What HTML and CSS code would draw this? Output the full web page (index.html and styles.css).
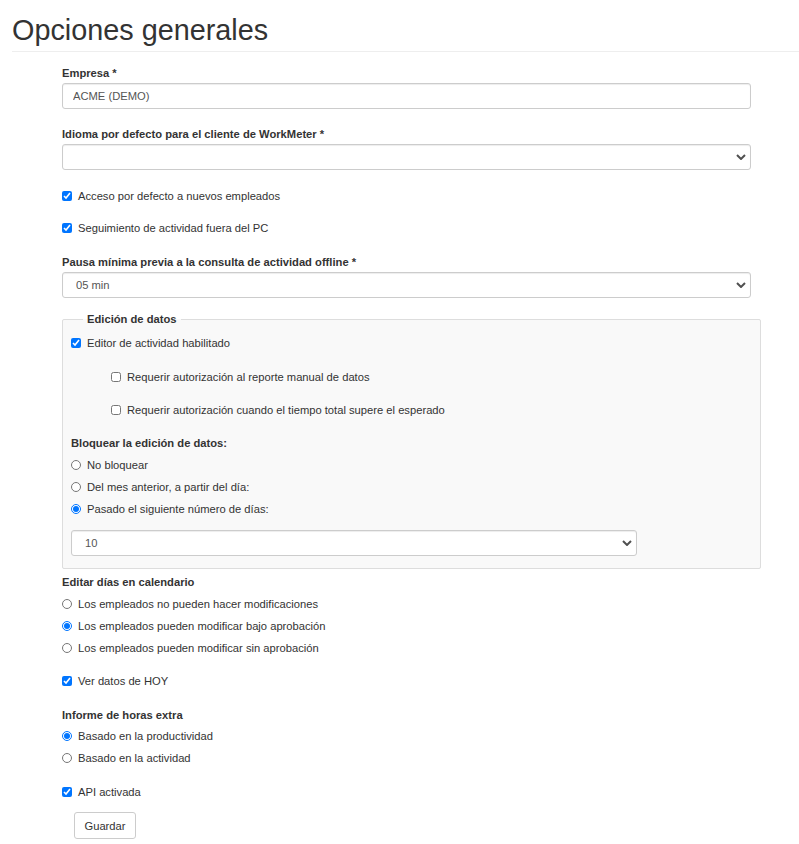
FILE: index.html
```html
<!DOCTYPE html>
<html lang="es">
<head>
<meta charset="utf-8">
<title>Opciones generales</title>
<link rel="stylesheet" href="styles.css">
</head>
<body>
<header class="page-header">
  <h1 class="title">Opciones generales</h1>
</header>
<form class="form">
  <label class="lbl lbl-input mt-13">Empresa *</label>
  <input class="control" type="text" value="ACME (DEMO)">

  <label class="lbl lbl-input mt-17">Idioma por defecto para el cliente de WorkMeter *</label>
  <div class="select-wrap">
    <select class="control select"><option></option></select>
    <svg class="chev" viewBox="0 0 10 6" width="10" height="6"><path d="M1 1 L5 5 L9 1" fill="none" stroke="#505050" stroke-width="2"/></svg>
  </div>

  <label class="check mt-18"><input type="checkbox" checked><span>Acceso por defecto a nuevos empleados</span></label>
  <label class="check mt-16"><input type="checkbox" checked><span>Seguimiento de actividad fuera del PC</span></label>

  <label class="lbl lbl-input mt-18">Pausa mínima previa a la consulta de actividad offline *</label>
  <div class="select-wrap">
    <select class="control select"><option>05 min</option></select>
    <svg class="chev" viewBox="0 0 10 6" width="10" height="6"><path d="M1 1 L5 5 L9 1" fill="none" stroke="#505050" stroke-width="2"/></svg>
  </div>

  <fieldset class="box mt-13">
    <legend class="box-legend">Edición de datos</legend>
    <label class="check"><input type="checkbox" checked><span>Editor de actividad habilitado</span></label>
    <label class="check sub mt-18"><input type="checkbox"><span>Requerir autorización al reporte manual de datos</span></label>
    <label class="check sub mt-17"><input type="checkbox"><span>Requerir autorización cuando el tiempo total supere el esperado</span></label>
    <div class="lbl mt-17">Bloquear la edición de datos:</div>
    <label class="check mt-6"><input type="radio" name="lock"><span>No bloquear</span></label>
    <label class="check mt-6"><input type="radio" name="lock"><span>Del mes anterior, a partir del día:</span></label>
    <label class="check mt-6"><input type="radio" name="lock" checked><span>Pasado el siguiente número de días:</span></label>
    <div class="select-wrap inner mt-13">
      <select class="control select"><option>10</option></select>
      <svg class="chev" viewBox="0 0 10 6" width="10" height="6"><path d="M1 1 L5 5 L9 1" fill="none" stroke="#505050" stroke-width="2"/></svg>
    </div>
  </fieldset>

  <div class="lbl mt-5">Editar días en calendario</div>
  <label class="check mt-6"><input type="radio" name="cal"><span>Los empleados no pueden hacer modificaciones</span></label>
  <label class="check mt-6"><input type="radio" name="cal" checked><span>Los empleados pueden modificar bajo aprobación</span></label>
  <label class="check mt-6"><input type="radio" name="cal"><span>Los empleados pueden modificar sin aprobación</span></label>

  <label class="check mt-17"><input type="checkbox" checked><span>Ver datos de HOY</span></label>

  <div class="lbl mt-18">Informe de horas extra</div>
  <label class="check mt-5"><input type="radio" name="ot" checked><span>Basado en la productividad</span></label>
  <label class="check mt-6"><input type="radio" name="ot"><span>Basado en la actividad</span></label>

  <label class="check mt-18"><input type="checkbox" checked><span>API activada</span></label>

  <button class="btn mt-12" type="button">Guardar</button>
</form>
</body>
</html>
```

FILE: styles.css
```css
html, body {
  margin: 0;
  padding: 0;
  background: #fff;
}
body {
  font-family: "Liberation Sans", Arial, sans-serif;
  font-size: 11.2px;
  line-height: 16px;
  color: #333;
}
.page-header {
  margin-left: 12px;
  padding: 13px 0 4px 0;
  border-bottom: 1px solid #eee;
}
.title {
  margin: 0;
  font-size: 28.8px;
  line-height: 34px;
  font-weight: normal;
  color: #333;
}
.form {
  display: flex;
  flex-direction: column;
  align-items: flex-start;
  padding-left: 62px;
  width: 699px;
}
.lbl {
  display: block;
  font-weight: bold;
  line-height: 16px;
}
.lbl-input {
  margin-bottom: 2px;
}
.control {
  box-sizing: border-box;
  width: 689px;
  height: 26px;
  margin: 0;
  border: 1px solid #ccc;
  border-radius: 3px;
  background: #fff;
  box-shadow: inset 0 1px 1px rgba(0,0,0,0.075);
  font-family: inherit;
  font-size: 11.2px;
  color: #555;
  padding: 0 10px;
  outline: none;
}
.select-wrap {
  position: relative;
  width: 689px;
}
.select {
  appearance: none;
  -webkit-appearance: none;
  padding-left: 13px;
  display: block;
}
.chev {
  position: absolute;
  right: 5px;
  top: 10px;
  pointer-events: none;
}
.select-wrap.inner {
  width: 566px;
}
.select-wrap.inner .select {
  width: 566px;
}
.check {
  display: flex;
  align-items: center;
  gap: 6px;
  height: 16px;
  line-height: 16px;
}
.check input {
  width: 10px;
  height: 10px;
  margin: 0;
  flex: none;
}
.check.sub {
  margin-left: 40px;
}
.box {
  box-sizing: border-box;
  width: 699px;
  margin-left: 0;
  margin-right: 0;
  padding: 8px 8px 12px 8px;
  border: 1px solid #ddd;
  border-radius: 2px;
  background: #f9f9f9;
  display: flex;
  flex-direction: column;
  align-items: flex-start;
}
.box-legend {
  font-weight: bold;
  line-height: 16px;
  padding: 0 4px;
  margin-left: 12px;
  color: #333;
}
.btn {
  margin-left: 12px;
  width: 62px;
  height: 27px;
  padding: 0;
  border: 1px solid #ccc;
  border-radius: 3px;
  background: #fff;
  font-family: inherit;
  font-size: 11.2px;
  color: #333;
}
.mt-5 { margin-top: 5px; }
.mt-6 { margin-top: 6px; }
.mt-12 { margin-top: 12px; }
.mt-13 { margin-top: 13px; }
.mt-16 { margin-top: 16px; }
.mt-17 { margin-top: 17px; }
.mt-18 { margin-top: 18px; }
```
